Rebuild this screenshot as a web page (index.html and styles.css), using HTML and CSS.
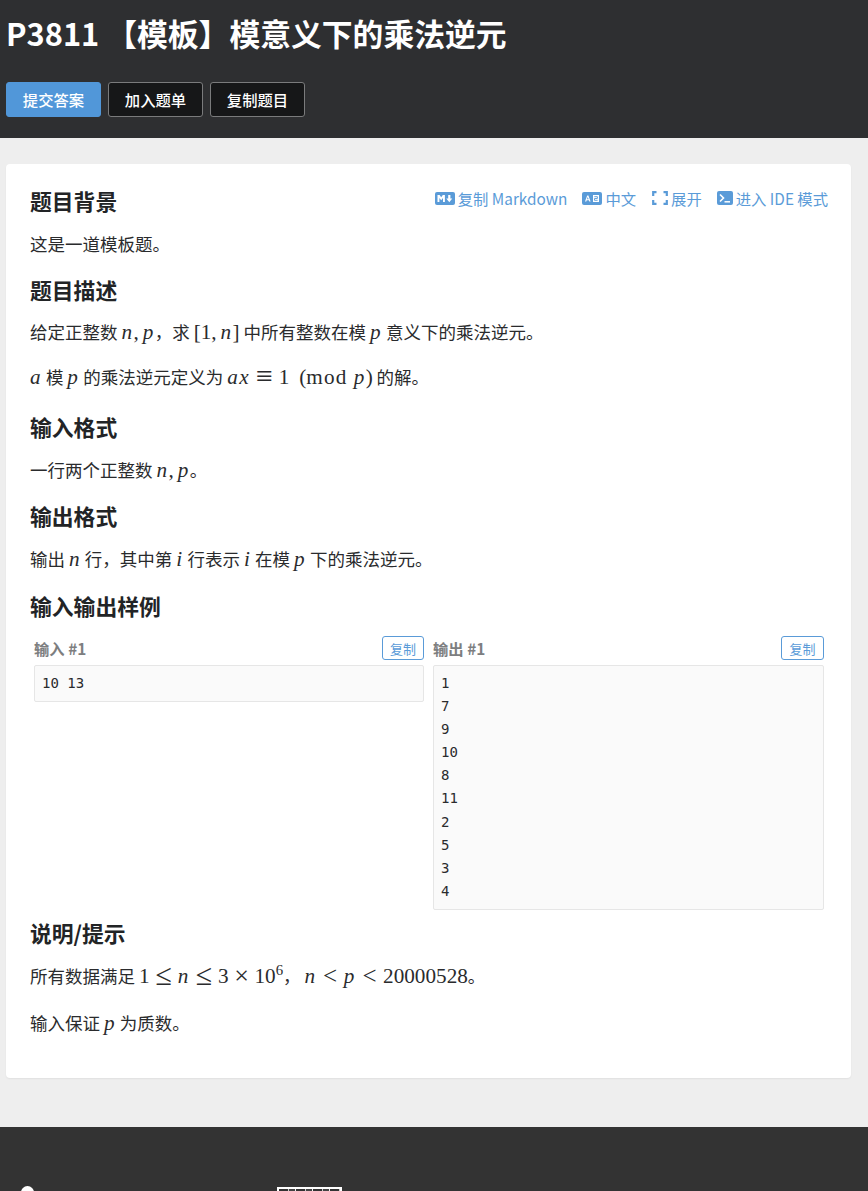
FILE: index.html
```html
<!DOCTYPE html>
<html lang="zh">
<head>
<meta charset="utf-8">
<title>P3811 【模板】模意义下的乘法逆元</title>
<link rel="stylesheet" href="styles.css">
</head>
<body>
<header class="header">
  <h1 class="title">P3811 【模板】模意义下的乘法逆元</h1>
  <div class="actions">
    <button class="btn btn-primary">提交答案</button>
    <button class="btn btn-dark">加入题单</button>
    <button class="btn btn-dark">复制题目</button>
  </div>
</header>
<main class="main">
  <article class="card">
    <div class="top-row">
      <h2 class="heading">题目背景</h2>
      <nav class="tools">
        <a class="tool"><svg class="icon" viewBox="0 0 20 13"><rect width="20" height="13" rx="2" fill="#5a9bd8"/><path d="M2.5 10V3H4.6L6.2 5.3 7.8 3H9.9V10H8V6L6.2 8.2 4.4 6V10Z M13.2 3H15.4V6.5H17.3L14.3 10.2 11.3 6.5H13.2Z" fill="#fff"/></svg>复制 Markdown</a>
        <a class="tool tool-wide"><svg class="icon" viewBox="0 0 20 13"><rect width="20" height="13" rx="2" fill="#5a9bd8"/><path d="M3 9.5 5.2 3.5H6.4L8.6 9.5H7.3L6.9 8.3H4.7L4.3 9.5Z M5 7.3H6.6L5.8 5.1Z" fill="#fff"/><rect x="11" y="3" width="6" height="7" fill="#fff"/><path d="M12.3 4.7H15.4V6.5H12.5V8.3H15.6" stroke="#5a9bd8" stroke-width=".9" fill="none"/></svg>中文</a>
        <a class="tool"><svg class="icon icon-small" viewBox="0 0 16 14"><path d="M1.2 5V1.2H4.5M11.5 1.2H14.8V5M14.8 9V12.8H11.5M4.5 12.8H1.2V9" stroke="#5a9bd8" stroke-width="2.2" fill="none"/></svg>展开</a>
        <a class="tool"><svg class="icon icon-small" viewBox="0 0 16 14"><rect width="16" height="14" rx="2" fill="#5a9bd8"/><path d="M3 3.5 6.5 7 3 10.5" stroke="#fff" stroke-width="1.6" fill="none"/><path d="M7.5 10.8H13" stroke="#fff" stroke-width="1.5"/></svg>进入 IDE 模式</a>
      </nav>
    </div>
    <p class="para">这是一道模板题。</p>

    <h2 class="heading tight">题目描述</h2>
    <p class="para math-line">给定正整数 <span class="m"><i>n</i><span class="punct">,</span><i>p</i></span>，求 <span class="m">[1<span class="punct">,</span><i>n</i>]</span> 中所有整数在模 <span class="m"><i>p</i></span> 意义下的乘法逆元。</p>
    <p class="para math-line"><span class="m"><i>a</i></span> 模 <span class="m"><i>p</i></span> 的乘法逆元定义为 <span class="m"><i>ax</i><span class="rel rel-wide">≡</span>1<span class="quad"></span>(<span class="op">mod</span><span class="thin"></span><i>p</i>)</span> 的解。</p>

    <h2 class="heading">输入格式</h2>
    <p class="para">一行两个正整数 <span class="m"><i>n</i><span class="punct">,</span><i>p</i></span>。</p>

    <h2 class="heading">输出格式</h2>
    <p class="para">输出 <span class="m"><i>n</i></span> 行，其中第 <span class="m"><i>i</i></span> 行表示 <span class="m"><i>i</i></span> 在模 <span class="m"><i>p</i></span> 下的乘法逆元。</p>

    <h2 class="heading heading-samples">输入输出样例</h2>
    <div class="samples">
      <section class="sample">
        <div class="sample-head"><span class="sample-label">输入 #1</span><button class="copy">复制</button></div>
        <pre class="code">10 13</pre>
      </section>
      <section class="sample">
        <div class="sample-head"><span class="sample-label">输出 #1</span><button class="copy copy-wide">复制</button></div>
        <pre class="code">1
7
9
10
8
11
2
5
3
4</pre>
      </section>
    </div>

    <h2 class="heading">说明/提示</h2>
    <p class="para math-line">所有数据满足 <span class="m">1<span class="rel rel-wide">≤</span><i>n</i><span class="rel rel-wide">≤</span>3<span class="bin">×</span>10<sup>6</sup></span>， <span class="m"><i>n</i><span class="rel">&lt;</span><i>p</i><span class="rel">&lt;</span>20000528</span>。</p>
    <p class="para math-line last">输入保证 <span class="m"><i>p</i></span> 为质数。</p>
  </article>
</main>
<footer class="footer">
  <div class="footer-row">
    <span class="footer-dot"></span>
    <span class="footer-badge"></span>
  </div>
</footer>
</body>
</html>
```
FILE: styles.css
```css
* { box-sizing: border-box; }
html, body { margin: 0; height: 1191px; overflow: hidden; }
body {
  background: #eeeeee;
  color: #2a2b2d;
  font-family: "Noto Sans CJK SC", "Noto Sans", sans-serif;
  font-size: 17.5px;
  line-height: 26px;
  display: flex;
  flex-direction: column;
}
.header {
  background: #2e2f31;
  height: 138px;
  padding: 10px 6px 0;
}
.title {
  margin: 0 0 0 -1px;
  padding-left: 1px;
  color: #fff;
  font-size: 30.8px;
  font-weight: 700;
  line-height: 46px;
}
.actions { display: flex; gap: 7px; margin-top: 26px; }
.btn {
  width: 95px;
  height: 35px;
  padding: 0;
  border-radius: 3px;
  color: #fff;
  font: 500 15.33px/1 "Noto Sans CJK SC", sans-serif;
}
.btn-primary { background: #5197d9; border: 1px solid #5197d9; }
.btn-dark { background: #161718; border: 1px solid #7a7b7c; }
.main { padding: 26px 17px 0 6px; }
.card {
  background: #fff;
  border-radius: 4px;
  height: 914px;
  padding: 22px 23px 0 24px;
  box-shadow: 0 1px 2px rgba(0,0,0,.06);
}
.top-row { display: flex; justify-content: space-between; align-items: flex-start; }
.heading {
  margin: 18px 0 15px;
  font-size: 21.8px;
  line-height: 30px;
  font-weight: 700;
  color: #222426;
}
.heading.tight { margin-bottom: 14px; }
.heading.heading-samples { margin-top: 19px; }
.top-row .heading { margin: 0 0 15px; }
.tools { display: flex; gap: 15px; margin-top: 1px; }
.tool {
  display: flex;
  align-items: center;
  gap: 3px;
  color: #5a9bd8;
  font-size: 15.33px;
  line-height: 22px;
}
.tool-wide { margin-right: 1px; }
.icon { width: 20px; height: 13px; display: block; }
.icon-small { width: 16px; height: 14px; }
.para { margin: 0; }
.math-line { margin-bottom: 19px; }
.math-line + .heading { margin-top: 22px; }
.math-line + .last { margin-top: 21px; }
.m { font-family: "Liberation Serif", serif; font-size: 21.2px; line-height: 20px; }
.m i { font-style: italic; letter-spacing: 1.4px; }
.m sup { font-size: 14.8px; line-height: 0; }
.punct { margin-right: 4px; }
.rel { margin: 0 6.6px; font-size: 25px; vertical-align: -1px; }
.rel-wide { margin: 0 5.9px; font-size: 30px; vertical-align: -2px; }
.bin { margin: 0 5.6px; font-size: 26px; vertical-align: -1px; }
.op { letter-spacing: 1.2px; }
.quad { display: inline-block; width: 10px; }
.thin { display: inline-block; width: 6px; }
.samples {
  display: grid;
  grid-template-columns: 390px 391px;
  gap: 9px;
  margin: 1px 0 0 4px;
}
.sample { display: flex; flex-direction: column; }
.sample-head {
  display: flex;
  justify-content: space-between;
  align-items: center;
  height: 24px;
  margin-bottom: 5px;
}
.sample-label { color: #7d7e80; font-size: 15.33px; font-weight: 700; }
.copy {
  width: 42px;
  height: 24px;
  padding: 0;
  background: #fff;
  border: 1px solid #5a9bd8;
  border-radius: 3px;
  color: #5a9bd8;
  font: 13px/1 "Noto Sans CJK SC", sans-serif;
}
.copy-wide { width: 43px; }
.code {
  margin: 0;
  padding: 6px 7px;
  background: #fafafa;
  border: 1px solid #e6e6e6;
  border-radius: 2px;
  color: #2a2b2d;
  font: 14px/23.1px "DejaVu Sans Mono", monospace;
}
.samples + .heading { margin-top: 8px; }
.footer {
  flex: 1;
  margin-top: 49px;
  background: #333333;
  padding: 59px 0 0 21px;
  min-height: 64px;
}
.footer-row { display: flex; align-items: flex-start; gap: 243px; }
.footer-dot { width: 13px; height: 13px; border-radius: 50%; background: #fff; }
.footer-badge {
  width: 65px;
  height: 30px;
  margin-top: 1px;
  border: 2px solid #fff;
  background: repeating-linear-gradient(90deg, #333 0 9px, #ccc 9px 10px, #444 10px 16px, #eee 16px 17px);
}
```
